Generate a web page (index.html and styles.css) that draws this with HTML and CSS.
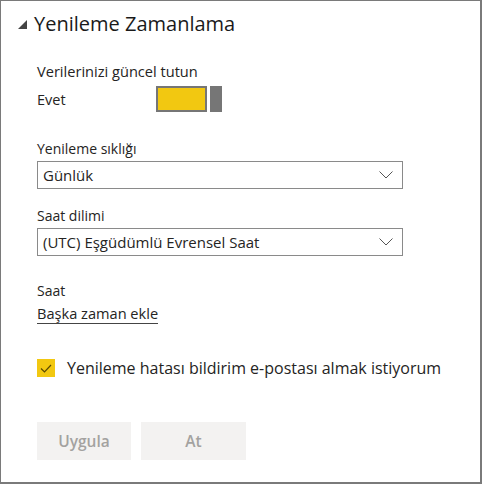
FILE: index.html
```html
<!DOCTYPE html>
<html lang="tr">
<head>
<meta charset="utf-8">
<link rel="stylesheet" href="styles.css">
</head>
<body>
<div class="panel">
  <div class="title">
    <svg class="tri" width="9" height="9" viewBox="0 0 9 9"><polygon points="9,0 9,9 0,9" fill="#444"/></svg>
    <span>Yenileme Zamanlama</span>
  </div>
  <div class="content">
    <div class="label first">Verilerinizi güncel tutun</div>
    <div class="toggle-row">
      <span class="toggle-label">Evet</span>
      <span class="toggle"><span class="track"></span><span class="thumb"></span></span>
    </div>

    <div class="label sec">Yenileme sıklığı</div>
    <div class="select"><span>Günlük</span>
      <svg width="14" height="8" viewBox="0 0 14 8"><polyline points="0.5,0.5 7,7 13.5,0.5" fill="none" stroke="#555" stroke-width="1"/></svg>
    </div>

    <div class="label sec2">Saat dilimi</div>
    <div class="select"><span>(UTC) Eşgüdümlü Evrensel Saat</span>
      <svg width="14" height="8" viewBox="0 0 14 8"><polyline points="0.5,0.5 7,7 13.5,0.5" fill="none" stroke="#555" stroke-width="1"/></svg>
    </div>

    <div class="label sec3">Saat</div>
    <a class="link">Başka zaman ekle</a>

    <div class="check-row">
      <span class="check"><svg width="12" height="9" viewBox="0 0 12 9"><polyline points="1,4.5 4.5,8 11,1" fill="none" stroke="#5a4a00" stroke-width="1.2"/></svg></span>
      <span class="check-label">Yenileme hatası bildirim e-postası almak istiyorum</span>
    </div>

    <div class="buttons">
      <button class="btn btn-apply">Uygula</button>
      <button class="btn btn-discard">At</button>
    </div>
  </div>
</div>
</body>
</html>
```

FILE: styles.css
```css
html, body {
  margin: 0;
  padding: 0;
  background: #fff;
}
.panel {
  box-sizing: border-box;
  width: 482px;
  height: 484px;
  border-style: solid;
  border-color: #7a7a7a;
  border-width: 1px 2px 2px 1px;
  font-family: "Open Sans", "Noto Sans", sans-serif;
  color: #252423;
  background: #fff;
}
.title {
  display: flex;
  align-items: center;
  padding: 7px 0 0 17px;
  height: 30px;
  font-size: 20px;
  color: #1a1a1a;
}
.title .tri {
  margin-right: 7px;
  margin-top: 3px;
}
.content {
  padding: 0 0 0 36px;
}
.label {
  font-size: 14px;
  line-height: 20px;
}
.label.first {
  margin-top: 23px;
  font-size: 14.6px;
}
.toggle-row {
  display: flex;
  align-items: center;
  height: 26px;
  margin-top: 5px;
}
.toggle-label {
  font-size: 14.5px;
  width: 119px;
}
.toggle {
  display: flex;
  gap: 3px;
  height: 26px;
}
.track {
  box-sizing: border-box;
  width: 51px;
  height: 26px;
  border: 2px solid #767676;
  background: #f2c811;
}
.thumb {
  width: 12px;
  height: 26px;
  background: #767676;
}
.sec { margin-top: 27px; }
.sec2 { margin-top: 17px; }
.sec3 { margin-top: 25px; }
.select {
  box-sizing: border-box;
  width: 366px;
  height: 28px;
  margin-top: 2px;
  border: 1px solid #8a8a8a;
  display: flex;
  align-items: center;
  justify-content: space-between;
  padding: 0 9px 0 5px;
  font-size: 15px;
}
.link {
  display: inline-block;
  font-size: 14.6px;
  line-height: 19px;
  margin-top: 3px;
  color: #252423;
  border-bottom: 1px solid #444;
}
.check-row {
  display: flex;
  align-items: center;
  margin-top: 33px;
}
.check {
  width: 18px;
  height: 18px;
  background: #f2c811;
  display: flex;
  align-items: center;
  justify-content: center;
  margin-right: 12px;
}
.check-label {
  font-size: 16px;
}
.buttons {
  display: flex;
  gap: 10px;
  margin-top: 43px;
}
.btn {
  border: none;
  background: #f3f2f1;
  color: #a3a2a0;
  font-family: "Open Sans", "Noto Sans", sans-serif;
  font-weight: 600;
  font-size: 15.5px;
  height: 38px;
  padding: 0;
}
.btn-apply { width: 94px; }
.btn-discard { width: 105px; }
```
